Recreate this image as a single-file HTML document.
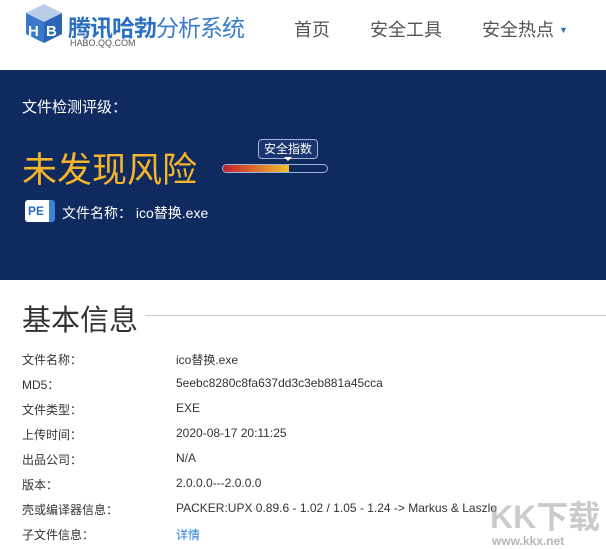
<!DOCTYPE html><html><head><meta charset="utf-8"><style>
body{margin:0;width:606px;height:549px;overflow:hidden;background:#fff;font-family:"Liberation Sans","Noto Sans CJK SC",sans-serif;position:relative}
.a{position:absolute;white-space:nowrap}
.lbl{left:22px;font-size:12px;color:#333}
.val{left:176px;font-size:12px;color:#333}
</style></head><body>
<svg class="a" style="left:22px;top:2px" width="44" height="42" viewBox="0 0 44 42">
<path d="M22 2 L40 11 L40 32 L22 41 L4 32 L4 11 Z" fill="#b8cdea"/>
<path d="M4 11 L22 20 L22 41 L4 32Z" fill="#3a78c9"/>
<path d="M22 20 L40 11 L40 32 L22 41Z" fill="#2a66b8"/>
<text x="6" y="34" font-size="15" font-weight="bold" fill="#fff" font-family="Liberation Sans">H</text>
<text x="24" y="34" font-size="15" font-weight="bold" fill="#fff" font-family="Liberation Sans">B</text>
</svg>
<div class="a" style="left:68px;top:9px;font-size:23px;color:#2a6fc4;font-weight:bold;letter-spacing:-1px">腾讯哈勃<span style="font-weight:normal;color:#3a7ccc">分析系统</span></div>
<div class="a" style="left:70px;top:38px;font-size:9px;color:#555">HABO.QQ.COM</div>
<div class="a" style="left:294px;top:16px;font-size:18px;color:#555">首页</div>
<div class="a" style="left:370px;top:16px;font-size:18px;color:#555">安全工具</div>
<div class="a" style="left:482px;top:16px;font-size:18px;color:#555">安全热点 <span style="font-size:9px;color:#2a6fc4;vertical-align:3px">▼</span></div>
<div class="a" style="left:0;top:70px;width:606px;height:210px;background:#0f2a5f"></div>
<div class="a" style="left:22px;top:96px;font-size:15px;color:#fff">文件检测评级：</div>
<div class="a" style="left:22px;top:149px;font-size:35px;color:#f5b42a;line-height:44px">未发现风险</div>
<div class="a" style="left:258px;top:139px;width:58px;height:18px;border:1px solid #9fb3d6;border-radius:4px;font-size:12px;color:#fff;text-align:center;line-height:18px;background:#1a3670">安全指数</div>
<div class="a" style="left:284px;top:157px;width:0;height:0;border:4px solid transparent;border-top-color:#fff"></div>
<div class="a" style="left:222px;top:164px;width:104px;height:7px;border:1px solid #9fb3d6;border-radius:5px;overflow:hidden"><div style="width:66px;height:7px;background:linear-gradient(90deg,#c2202a,#f2c232)"></div></div>
<div class="a" style="left:25px;top:200px;width:30px;height:22px;background:#fff;border-radius:3px;font-size:12px;font-weight:bold;color:#2a6fc4;line-height:22px;text-indent:3px;border-right:6px solid #3b84d6;box-sizing:border-box">PE</div>
<div class="a" style="left:62px;top:203px;font-size:14px;color:#fff">文件名称： ico替换.exe</div>
<div class="a" style="left:22px;top:297px;font-size:29px;color:#333">基本信息</div>
<div class="a" style="left:145px;top:315px;width:461px;height:1px;background:#ccc"></div>
<div class="a lbl" style="top:351px">文件名称：</div><div class="a val" style="top:351px">ico替换.exe</div>
<div class="a lbl" style="top:376px">MD5：</div><div class="a val" style="top:376px">5eebc8280c8fa637dd3c3eb881a45cca</div>
<div class="a lbl" style="top:401px">文件类型：</div><div class="a val" style="top:401px">EXE</div>
<div class="a lbl" style="top:426px">上传时间：</div><div class="a val" style="top:426px">2020-08-17 20:11:25</div>
<div class="a lbl" style="top:451px">出品公司：</div><div class="a val" style="top:451px">N/A</div>
<div class="a lbl" style="top:476px">版本：</div><div class="a val" style="top:476px">2.0.0.0---2.0.0.0</div>
<div class="a lbl" style="top:501px">壳或编译器信息：</div><div class="a val" style="top:501px">PACKER:UPX 0.89.6 - 1.02 / 1.05 - 1.24 -&gt; Markus &amp; Laszlo</div>
<div class="a lbl" style="top:526px">子文件信息：</div><div class="a val" style="top:526px;color:#2a7fd4">详情</div>
<div class="a" style="left:490px;top:492px;font-size:32px;color:rgba(160,160,160,0.55);font-weight:bold">KK下载</div>
<div class="a" style="left:492px;top:534px;font-size:12px;color:rgba(150,150,150,0.7);font-weight:bold">www.kkx.net</div>
</body></html>
